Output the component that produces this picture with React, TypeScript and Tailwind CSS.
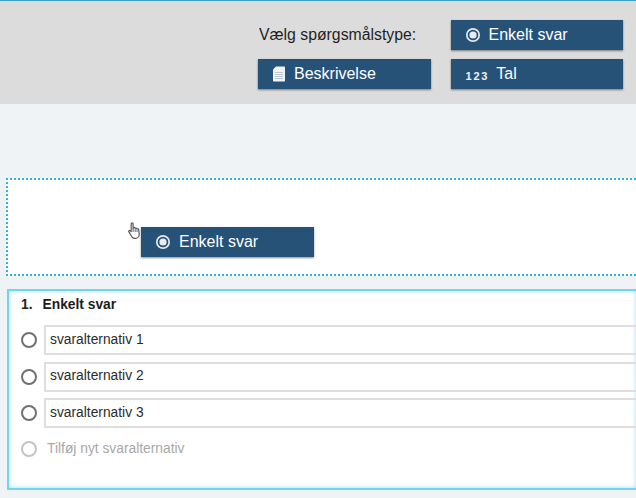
import type { ReactNode } from "react";

const font = { fontFamily: '"Liberation Sans", Arial, sans-serif' };

function RadioIcon() {
  return (
    <svg width="16" height="16" viewBox="0 0 16 16" className="shrink-0">
      <circle cx="8" cy="8" r="6.2" fill="none" stroke="#e4e9ee" strokeWidth="1.7" />
      <circle cx="8" cy="8" r="3.6" fill="#e9edf1" />
    </svg>
  );
}

function DocIcon() {
  return (
    <svg width="12" height="16" viewBox="0 0 12 16" className="shrink-0">
      <path d="M3 .5h8.2c.4 0 .8.3.8.8v13.4c0 .4-.4.8-.8.8H.8c-.4 0-.8-.4-.8-.8V3.6z" fill="#f1f4f6" />
      <path d="M2 6.5h8M2 8.5h8M2 10.5h8M2 12.5h8" stroke="#b4c2cf" strokeWidth="0.9" />
    </svg>
  );
}

function TypeButton({ icon, label, className = "" }: { icon: ReactNode; label: string; className?: string }) {
  return (
    <div
      className={`flex h-[30px] w-[172.5px] items-center bg-[#265278] text-[16px] text-white shadow-[0_1px_2px_rgba(0,0,0,0.45)] ${className}`}
    >
      {icon}
      <span>{label}</span>
    </div>
  );
}

function HandCursor() {
  return (
    <svg width="14" height="18" viewBox="0 0 14 18" className="absolute left-[128px] top-[222px]">
      <path
        d="M3.2 1.8c0-1.3 1.9-1.3 1.9 0v5l.3-1.2c.9-.5 1.6-.1 1.7.7.8-.5 1.6-.3 1.8.6.9-.4 1.7 0 1.8 1l.5 4.6c0 2-1.5 3.8-3.6 3.8H6.5c-1.4 0-2.2-.8-3-2L.9 9.9c-.7-1 .6-2 1.5-1.1l.8.9z"
        fill="#fff"
        stroke="#55595c"
        strokeWidth="1.2"
        strokeLinejoin="round"
      />
      <path d="M5.2 7v3M7.2 7v3M9 7.5V10" stroke="#55595c" strokeWidth="0.9" />
    </svg>
  );
}

function Option({ label }: { label: string }) {
  return (
    <div className="flex items-center">
      <span className="h-4 w-4 shrink-0 rounded-full border-2 border-[#707070] bg-white" />
      <div className="ml-[7px] flex h-[30px] flex-1 items-center border-y-2 border-l-2 border-[#dedede] pl-[4px] text-[13.8px] text-[#2b2b2b]">
        {label}
      </div>
    </div>
  );
}

export default function App() {
  return (
    <div className="relative h-[498px] w-[636px] overflow-hidden bg-[#eff3f6]" style={font}>
      <header className="flex h-[104px] items-start justify-end border-t border-[#35a0c8] bg-[#dcdcdc] pr-[13px] pt-[19px]">
        <div className="grid grid-cols-[172.5px_172.5px] gap-x-5 gap-y-[9px]">
          <div className="flex items-center pb-[1px] pl-[1px] text-[15.8px] text-[#1f1f1f]">Vælg spørgsmålstype:</div>
          <TypeButton icon={<RadioIcon />} label="Enkelt svar" className="gap-[8px] pl-[14px]" />
          <TypeButton icon={<DocIcon />} label="Beskrivelse" className="gap-[9px] pl-[15px]" />
          <TypeButton
            icon={<span className="pt-[4px] text-[11px] font-bold tracking-[1.8px] text-[#eef2f5]">123</span>}
            label="Tal"
            className="gap-[7px] pl-[15px]"
          />
        </div>
      </header>

      <main className="pl-[6px] pt-[74px]">
        <div className="h-[98px] border-y-2 border-l-2 border-dotted border-[#29b6e0] bg-white" />
        <section className="ml-[1px] mt-[13px] h-[201px] border-2 border-r-0 border-[#74d3f3] bg-white pl-[12px] pt-[5px] shadow-[inset_0_0_4px_rgba(127,214,243,0.8)]">
          <h2 className="mb-[11px] flex h-[18px] items-center gap-[10px] text-[13.8px] font-bold text-[#1d1d1d]">
            <span>1.</span>
            <span>Enkelt svar</span>
          </h2>
          <div className="flex flex-col gap-[6.5px]">
            <Option label="svaralternativ 1" />
            <Option label="svaralternativ 2" />
            <Option label="svaralternativ 3" />
          </div>
          <div className="mt-[11px] flex items-center gap-[10px] text-[13.8px] text-[#a8a8a8]">
            <span className="h-4 w-4 rounded-full border-2 border-[#c4c4c4]" />
            Tilføj nyt svaralternativ
          </div>
        </section>
      </main>

      <TypeButton
        icon={<RadioIcon />}
        label="Enkelt svar"
        className="absolute left-[141px] top-[227px] gap-[8px] pl-[14px]"
      />
      <HandCursor />
    </div>
  );
}
